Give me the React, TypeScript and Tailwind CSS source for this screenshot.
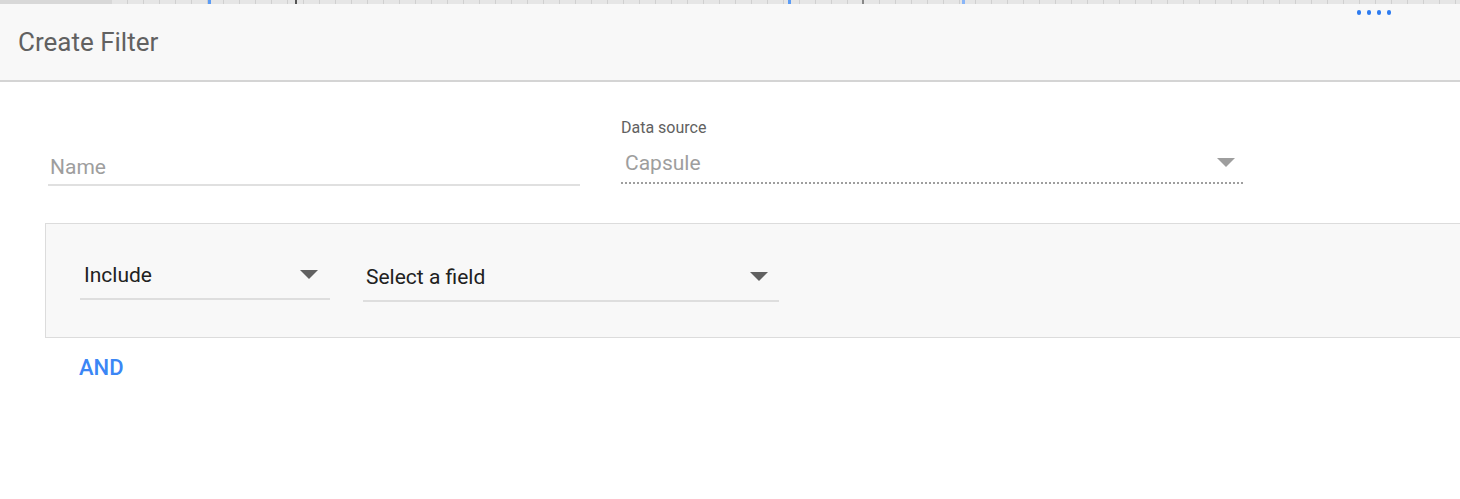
import React from "react";

function Caret({ className = "" }: { className?: string }) {
  return (
    <svg width="18" height="10" viewBox="0 0 18 10" className={className}>
      <path d="M0 0 L18 0 L9 9 Z" fill="currentColor" />
    </svg>
  );
}

const ticks = Array.from({ length: 84 }, (_, i) => i);

export default function App() {
  return (
    <div className="w-[1460px] h-[499px] bg-white overflow-hidden font-['Roboto',sans-serif]">
      {/* ruler strip */}
      <div className="h-[4px] flex bg-[#e6e6e6]">
        <div className="w-[112px] bg-[#d8d8d8] shrink-0" />
        <div className="relative flex-1 flex">
          {ticks.map((i) => (
            <div key={i} className="w-[16px] shrink-0 border-r border-[#d0d0d0]" />
          ))}
          <span className="absolute left-[96px] top-0 w-[3px] h-[4px] bg-[#5b9cf6]" />
          <span className="absolute left-[183px] top-0 w-[2px] h-[4px] bg-[#555]" />
          <span className="absolute left-[676px] top-0 w-[3px] h-[4px] bg-[#5b9cf6]" />
          <span className="absolute left-[750px] top-0 w-[2px] h-[4px] bg-[#888]" />
          <span className="absolute left-[850px] top-0 w-[3px] h-[4px] bg-[#8ab6f8]" />
        </div>
      </div>

      {/* header */}
      <div className="relative h-[78px] bg-[#f8f8f8] border-b-2 border-[#d4d4d4] flex items-center px-[18px]">
        <h1 className="text-[26px] text-[#616161] leading-none">Create Filter</h1>
        <div className="absolute top-[6px] left-[1357px] flex gap-[6px]">
          {[0, 1, 2, 3].map((d) => (
            <span key={d} className="w-[4px] h-[5px] rounded-full bg-[#2f7cf0]" />
          ))}
        </div>
      </div>

      {/* name + data source */}
      <div className="flex items-start pt-[37px] pl-[48px] gap-[41px]">
        <div className="w-[532px] mt-[35px] border-b-2 border-[#e0e0e0] pb-[3px] pl-[2px]">
          <span className="text-[21px] text-[#9e9e9e] leading-[26px]">Name</span>
        </div>
        <div className="w-[622px] flex flex-col">
          <span className="text-[16px] text-[#616161] leading-[18px] mb-[13px]">Data source</span>
          <div className="flex items-center justify-between border-b-2 border-dotted border-[#9e9e9e] pl-[4px] pr-[8px] pb-[6px]">
            <span className="text-[21px] text-[#9e9e9e] leading-[26px]">Capsule</span>
            <Caret className="text-[#9e9e9e]" />
          </div>
        </div>
      </div>

      {/* filter clause box */}
      <div className="ml-[45px] mt-[37px] w-[1430px] h-[115px] bg-[#f8f8f8] border border-[#dcdcdc] flex items-start pt-[38px] pl-[34px] gap-[33px]">
        <div className="w-[250px] flex items-center justify-between border-b-2 border-[#dedede] pl-[4px] pr-[12px] pb-[10px]">
          <span className="text-[21px] text-[#212121] leading-[26px]">Include</span>
          <Caret className="text-[#616161]" />
        </div>
        <div className="w-[416px] flex items-center justify-between border-b-2 border-[#dedede] pl-[3px] pr-[11px] pb-[10px] mt-[2px]">
          <span className="text-[21px] text-[#212121] leading-[26px]">Select a field</span>
          <Caret className="text-[#616161]" />
        </div>
      </div>

      <div className="pl-[79px] pt-[17px]">
        <button className="text-[22px] font-medium text-[#3b86f5] leading-[26px]">AND</button>
      </div>
    </div>
  );
}
